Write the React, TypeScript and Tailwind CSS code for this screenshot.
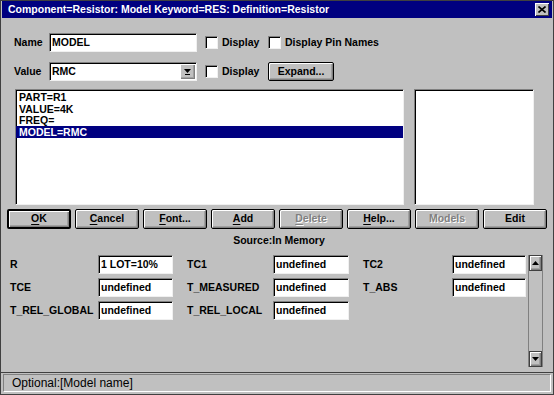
const FONT = "font-['Liberation_Sans',Arial,sans-serif]";

const sunken =
  "bg-white border border-t-[#808080] border-l-[#808080] border-r-[#f0f0f0] border-b-[#f0f0f0] shadow-[inset_1px_1px_0_#000]";
const raised =
  "bg-[#c0c0c0] shadow-[inset_1px_1px_0_#fff,inset_-1px_-1px_0_#808080,inset_-2px_-2px_0_#a0a0a0]";

const Check = ({ label, width }: { label: string; width: string }) => (
  <div className={`flex items-center ${width}`}>
    <div className={`w-[13px] h-[13px] ${sunken}`} />
    <span className="ml-[4px]">{label}</span>
  </div>
);

const DownArrow = () => (
  <svg width="7" height="6" viewBox="0 0 7 6">
    <path d="M0 0h7L3.5 4z" fill="#000" />
    <rect x="1" y="5" width="5" height="1" fill="#000" />
  </svg>
);

const Btn = ({ label, u, disabled, def }: { label: string; u?: number; disabled?: boolean; def?: boolean }) => {
  const chars = u === undefined ? label : (
    <>
      {label.slice(0, u)}
      <span className="underline underline-offset-[2px]">{label[u]}</span>
      {label.slice(u + 1)}
    </>
  );
  return (
    <button
      className={`h-[20px] w-[64px] rounded-[2px] ${raised} ${def ? "border-2" : "border"} border-black flex items-center justify-center ${
        disabled ? "text-[#808080] [text-shadow:1px_1px_0_#fff]" : "text-black"
      }`}
    >
      {chars}
    </button>
  );
};

const Field = ({ value, w }: { value: string; w: string }) => (
  <div className={`h-[19px] ${w} ${sunken} pl-[2px] flex items-center leading-none`}>{value}</div>
);

export default function App() {
  const params = [
    ["R", "1 LOT=10%", "TC1", "undefined", "TC2", "undefined"],
    ["TCE", "undefined", "T_MEASURED", "undefined", "T_ABS", "undefined"],
    ["T_REL_GLOBAL", "undefined", "T_REL_LOCAL", "undefined", "", ""],
  ];

  return (
    <div className={`w-[554px] h-[395px] bg-[#c0c0c0] border border-[#404040] flex flex-col text-[10.5px] font-bold text-black ${FONT}`}>
      {/* title bar */}
      <div className="mx-[1px] h-[17px] bg-[#000080] flex items-center justify-between pl-[6px] pr-[3px]">
        <span className="text-white text-[10.5px]">Component=Resistor: Model Keyword=RES: Definition=Resistor</span>
        <div className="w-[14px] h-[13px] bg-[#c0c0c0] shadow-[inset_1px_1px_0_#fff,inset_-1px_-1px_0_#404040] flex items-center justify-center">
          <svg width="8" height="7" viewBox="0 0 8 7">
            <path d="M0.5 0.5l7 6M7.5 0.5l-7 6" stroke="#000" strokeWidth="1.6" />
          </svg>
        </div>
      </div>

      {/* name row */}
      <div className="mt-[15px] pl-[13px] flex items-center h-[19px]">
        <span className="w-[35px]">Name</span>
        <div className={`h-[19px] w-[148px] ${sunken} pl-[2px] flex items-center`}>MODEL</div>
        <div className="ml-[8px] flex">
          <Check label="Display" width="w-[63px]" />
          <Check label="Display Pin Names" width="w-[120px]" />
        </div>
      </div>

      {/* value row */}
      <div className="mt-[10px] pl-[13px] flex items-center h-[19px]">
        <span className="w-[35px]">Value</span>
        <div className={`h-[19px] w-[148px] ${sunken} pl-[2px] pr-[1px] flex items-center justify-between`}>
          <span>RMC</span>
          <div className={`w-[15px] h-[15px] ${raised} flex items-center justify-center`}>
            <DownArrow />
          </div>
        </div>
        <div className="ml-[8px] flex items-center">
          <Check label="Display" width="w-[63px]" />
          <button className={`h-[19px] w-[66px] rounded-[2px] border border-black ${raised}`}>Expand...</button>
        </div>
      </div>

      {/* list boxes */}
      <div className="mt-[8px] pl-[14px] flex gap-[10px]">
        <div className={`h-[116px] w-[389px] ${sunken} pt-[1px] leading-[12px]`}>
          <div className="pl-[3px] h-[11.7px]">PART=R1</div>
          <div className="pl-[3px] h-[11.7px]">VALUE=4K</div>
          <div className="pl-[3px] h-[11.7px]">FREQ=</div>
          <div className="pl-[3px] h-[12px] bg-[#000080] text-white">MODEL=RMC</div>
        </div>
        <div className={`h-[116px] w-[120px] ${sunken}`} />
      </div>

      {/* buttons */}
      <div className="mt-[4px] pl-[6px] flex gap-[4px]">
        <Btn label="OK" u={0} def />
        <Btn label="Cancel" u={0} />
        <Btn label="Font..." u={0} />
        <Btn label="Add" u={0} />
        <Btn label="Delete" u={0} disabled />
        <Btn label="Help..." u={0} />
        <Btn label="Models" disabled />
        <Btn label="Edit" />
      </div>

      <div className="mt-[5px] h-[14px] pl-[4px] flex items-center justify-center">Source:In Memory</div>

      {/* parameters */}
      <div className="mt-[7px] pl-[9px] flex h-[112px]">
        <div className="grid grid-cols-[88px_75px_100px_76px_103px_74px] auto-rows-[19px] gap-y-[4px] items-center">
          {params.map((row, i) => (
            <div key={i} className="contents">
              <span>{row[0]}</span>
              <Field value={row[1]} w="w-[75px]" />
              <span className="pl-[14px]">{row[2]}</span>
              <Field value={row[3]} w="w-[76px]" />
              <span className="pl-[14px]">{row[4]}</span>
              {row[5] ? <Field value={row[5]} w="w-[74px]" /> : <span />}
            </div>
          ))}
        </div>
        <div className="ml-[2px] w-[15px] h-[112px] flex flex-col border-x border-[#808080] bg-[#c0c0c0]">
          <div className={`h-[16px] ${raised} border border-[#404040] flex items-center justify-center`}>
            <svg width="7" height="4" viewBox="0 0 7 4">
              <path d="M0 4h7L3.5 0z" fill="#000" />
            </svg>
          </div>
          <div className="flex-1" />
          <div className={`h-[16px] ${raised} border border-[#404040] flex items-center justify-center`}>
            <svg width="7" height="4" viewBox="0 0 7 4">
              <path d="M0 0h7L3.5 4z" fill="#000" />
            </svg>
          </div>
        </div>
      </div>

      {/* status bar */}
      <div className="mt-auto border-t border-[#404040] pt-[1px] pb-[2px] px-[2px]">
        <div className="h-[18px] border border-t-[#808080] border-l-[#808080] border-r-[#fff] border-b-[#fff] flex items-center pl-[8px] font-normal text-[12px]">
          Optional:[Model name]
        </div>
      </div>
    </div>
  );
}
